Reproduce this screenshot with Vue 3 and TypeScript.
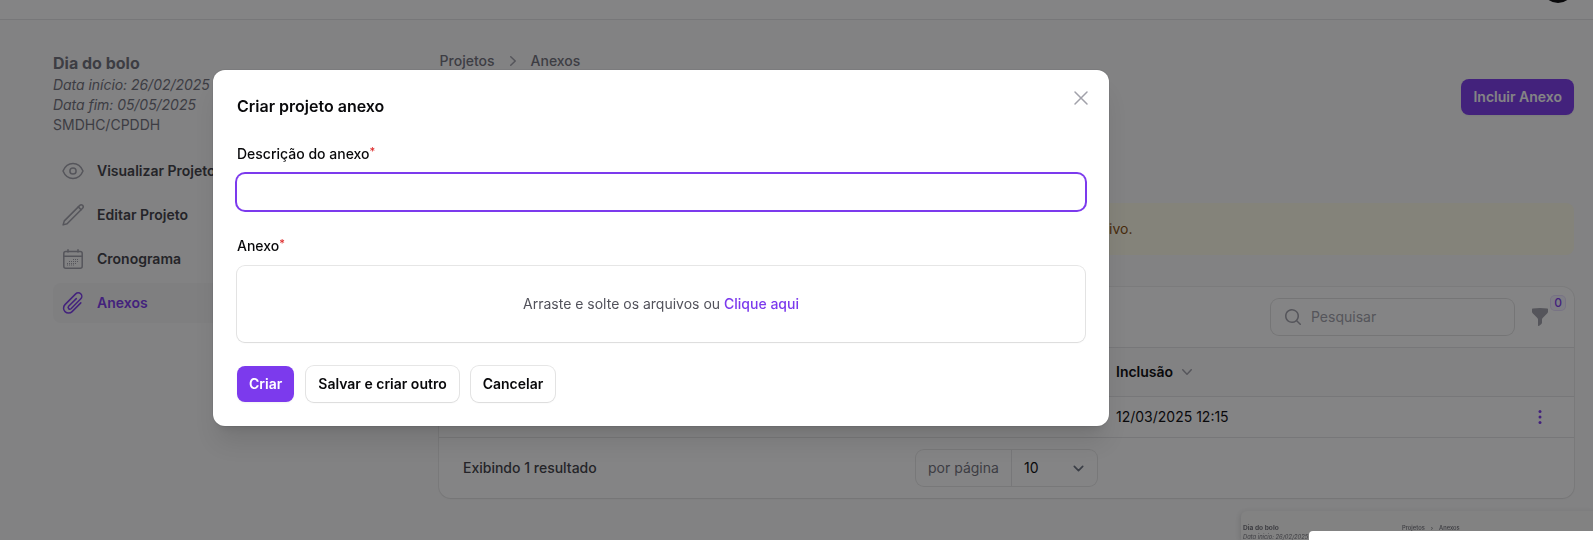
<script setup lang="ts">
import { ref } from 'vue'

interface MenuItem {
  label: string
  icon: 'eye' | 'pencil' | 'calendar' | 'clip'
  active?: boolean
}

const menu: MenuItem[] = [
  { label: 'Visualizar Projeto', icon: 'eye' },
  { label: 'Editar Projeto', icon: 'pencil' },
  { label: 'Cronograma', icon: 'calendar' },
  { label: 'Anexos', icon: 'clip', active: true },
]

// Day marks inside the calendar glyph, as [x, y] pairs
const days: number[][] = [
  [12.5, 12.5], [14.5, 12.5], [16.5, 12.5],
  [8.5, 14.5], [10.5, 14.5], [12.5, 14.5], [14.5, 14.5], [16.5, 14.5],
  [6.5, 16.5], [8.5, 16.5], [10.5, 16.5], [12.5, 16.5], [14.5, 16.5],
  [6.5, 18], [8.5, 18], [10.5, 18], [12.5, 18],
]

const description = ref('')
</script>

<template>
  <div class="page">
    <header class="topbar"><span class="avatar"></span></header>

    <div class="layout">
      <aside class="sidebar">
        <h2>Dia do bolo</h2>
        <p><em>Data início: 26/02/2025</em></p>
        <p><em>Data fim: 05/05/2025</em></p>
        <p>SMDHC/CPDDH</p>
        <nav>
          <a v-for="item in menu" :key="item.label" :class="{ active: item.active }">
            <svg viewBox="0 0 24 24" width="24" height="24" fill="none" stroke="currentColor" stroke-width="1.5" stroke-linecap="round" stroke-linejoin="round">
              <template v-if="item.icon === 'eye'">
                <path d="M2 12C4.200 6.800 7.800 4.500 12 4.500S19.800 6.800 22 12C19.800 17.200 16.200 19.500 12 19.500S4.200 17.200 2 12Z" />
                <circle cx="12" cy="12" r="3.100" />
              </template>
              <template v-else-if="item.icon === 'pencil'">
                <path d="M2.100 21.900L3.300 17.900L18.800 2.400A1.950 1.950 0 0 1 21.600 5.200L6.100 20.700Z" />
                <path d="M17.300 3.900L20.100 6.700" />
              </template>
              <template v-else-if="item.icon === 'calendar'">
                <rect x="2.800" y="4.500" width="18.400" height="16.700" rx="2" />
                <path d="M2.800 9.200H21.200M7 2.700V5M17 2.700V5" />
                <rect v-for="(d, i) in days" :key="i" :x="d[0] - 0.5" :y="d[1] - 0.5" width="1" height="1" fill="currentColor" stroke="none" />
              </template>
              <path v-else d="M19.800 11.900L11.100 20.600A4.900 4.900 0 0 1 4 13.600L14.700 2.900A3.450 3.450 0 0 1 19.800 7.800L10 17.700A1.700 1.700 0 0 1 7.600 15.300L15.300 7.600" />
            </svg>
            <span>{{ item.label }}</span>
          </a>
        </nav>
      </aside>

      <main class="content">
        <div class="crumbs">
          <span>Projetos</span>
          <svg viewBox="0 0 20 20" width="20" height="20" fill="currentColor"><path fill-rule="evenodd" d="M7.210 14.770a.75.75 0 0 1 .02-1.060L11.168 10 7.230 6.290a.75.75 0 1 1 1.040-1.080l4.500 4.250a.75.75 0 0 1 0 1.080l-4.500 4.250a.75.75 0 0 1-1.060-.02z" /></svg>
          <span>Anexos</span>
        </div>
        <div class="actions"><button class="btn primary">Incluir Anexo</button></div>
        <div class="notice">ivo.</div>

        <section class="card">
          <div class="toolbar">
            <div class="search">
              <svg viewBox="0 0 20 20" width="20" height="20" fill="currentColor"><path fill-rule="evenodd" d="M9 3.500a5.500 5.500 0 1 0 0 11 5.500 5.500 0 0 0 0-11zM2 9a7 7 0 1 1 12.452 4.391l3.328 3.329a.75.75 0 1 1-1.060 1.060l-3.329-3.328A7 7 0 0 1 2 9z" /></svg>
              <span>Pesquisar</span>
            </div>
            <div class="filter">
              <svg viewBox="0 0 20 20" width="20" height="20" fill="currentColor"><path fill-rule="evenodd" d="M2.628 1.601C5.028 1.206 7.490 1 10 1s4.973.206 7.372.601a.75.75 0 0 1 .628.740v2.288a2.250 2.250 0 0 1-.659 1.590l-4.682 4.683a2.250 2.250 0 0 0-.659 1.590v3.037c0 .684-.310 1.330-.844 1.757l-1.937 1.550A.75.75 0 0 1 8 18.250v-5.757a2.250 2.250 0 0 0-.659-1.591L2.659 6.220A2.250 2.250 0 0 1 2 4.629V2.340a.75.75 0 0 1 .628-.740z" /></svg>
              <span class="badge">0</span>
            </div>
          </div>
          <div class="row head">
            <span>Inclusão</span>
            <svg viewBox="0 0 20 20" width="20" height="20" fill="currentColor"><path fill-rule="evenodd" d="M5.230 7.210a.75.75 0 0 1 1.060.02L10 11.168l3.710-3.938a.75.75 0 1 1 1.080 1.040l-4.250 4.500a.75.75 0 0 1-1.080 0l-4.250-4.500a.75.75 0 0 1 .02-1.060z" /></svg>
          </div>
          <div class="row">
            <span>12/03/2025 12:15</span>
            <svg class="dots" viewBox="0 0 20 20" width="20" height="20" fill="currentColor"><circle cx="10" cy="4.500" r="1.500" /><circle cx="10" cy="10" r="1.500" /><circle cx="10" cy="15.500" r="1.500" /></svg>
          </div>
          <footer>
            <span class="total">Exibindo 1 resultado</span>
            <div class="perpage">
              <span class="prefix">por página</span>
              <span class="value">10</span>
              <svg viewBox="0 0 20 20" width="21" height="21" fill="none" stroke="currentColor" stroke-width="1.600" stroke-linecap="round" stroke-linejoin="round"><path d="M6 8l4 4 4-4" /></svg>
            </div>
            <span></span>
          </footer>
        </section>
      </main>
    </div>

    <div class="overlay"></div>

    <form class="modal" @submit.prevent>
      <svg class="close" viewBox="0 0 24 24" width="24" height="24" fill="none" stroke="currentColor" stroke-width="1.500" stroke-linecap="round"><path d="M6 18L18 6M6 6l12 12" /></svg>
      <h2>Criar projeto anexo</h2>
      <label class="label first">Descrição do anexo<sup>*</sup></label>
      <input v-model="description" type="text" />
      <label class="label">Anexo<sup>*</sup></label>
      <div class="drop"><span>Arraste e solte os arquivos ou <b>Clique aqui</b></span></div>
      <div class="buttons">
        <button class="btn primary">Criar</button>
        <button class="btn">Salvar e criar outro</button>
        <button class="btn">Cancelar</button>
      </div>
    </form>

    <div class="preview">
      <div class="mini-side"><b>Dia do bolo</b><em>Data início: 26/02/2025</em></div>
      <div class="mini-crumbs"><span>Projetos</span><span class="sep">›</span><span>Anexos</span></div>
      <div class="mini-modal"></div>
    </div>
  </div>
</template>

<style>
body {
  margin: 0;
  background: #fafafa;
  overflow: hidden;
}
</style>

<style scoped>
* {
  box-sizing: border-box;
}
.page {
  position: relative;
  height: 540px;
  overflow: hidden;
  background: #fafafa;
  font-family: Inter, 'Liberation Sans', sans-serif;
  font-size: 14px;
  line-height: 20px;
  color: #09090b;
}
h2,
p {
  margin: 0;
}
svg {
  display: block;
  flex: none;
}
.topbar {
  display: flex;
  justify-content: flex-end;
  align-items: flex-end;
  height: 19px;
  padding: 0 19px 16px 0;
  background: #fff;
  box-shadow: 0 1px 0 #e4e4e6;
}
.avatar {
  flex: none;
  width: 32px;
  height: 32px;
  border-radius: 50%;
  background: #09090b;
}
.layout {
  display: grid;
  grid-template-columns: 354px 1135px;
  gap: 32px;
  padding: 32px 19px 0 53px;
}
.sidebar {
  color: #71717a;
}
.sidebar h2 {
  font-size: 16px;
  line-height: 24px;
  font-weight: 700;
}
.sidebar em {
  letter-spacing: -0.04px;
}
nav {
  display: flex;
  flex-direction: column;
  gap: 4px;
  margin-top: 16px;
}
nav a {
  display: flex;
  align-items: center;
  gap: 12px;
  height: 40px;
  padding: 8px;
  border-radius: 8px;
  font-weight: 600;
  color: #3f3f46;
}
nav a svg {
  color: #a1a1aa;
}
nav a.active {
  background: #f4f4f5;
  color: #7c3aed;
}
nav a.active svg {
  color: #7c3aed;
}
.content {
  display: flex;
  flex-direction: column;
}
.crumbs {
  display: flex;
  align-items: center;
  gap: 8px;
  height: 20px;
  padding-left: 0.6px;
  font-weight: 500;
  color: #71717a;
}
.crumbs svg {
  color: #a1a1aa;
}
.actions {
  display: flex;
  justify-content: flex-end;
  margin-top: 8px;
}
.btn {
  height: 36px;
  padding: 0 12px;
  border: 0;
  border-radius: 8px;
  background: #fff;
  color: #09090b;
  font: 600 14px/20px Inter, 'Liberation Sans', sans-serif;
  white-space: nowrap;
  box-shadow: 0 0 0 1px rgba(9, 9, 11, 0.1), 0 1px 2px rgba(0, 0, 0, 0.05);
}
.btn.primary {
  background: #7c3aed;
  color: #fff;
  box-shadow: 0 1px 2px rgba(0, 0, 0, 0.05);
}
.notice {
  height: 52px;
  margin-top: 88px;
  padding: 16px 16px 16px 670px;
  border-radius: 8px;
  background: #fefce8;
  color: #854d0e;
}
.card {
  margin-top: 32px;
  border-radius: 12px;
  background: #fff;
  box-shadow: 0 0 0 1px rgba(9, 9, 11, 0.06), 0 1px 2px rgba(0, 0, 0, 0.05);
}
.toolbar {
  display: flex;
  justify-content: flex-end;
  align-items: center;
  gap: 16px;
  height: 60px;
  padding: 0 24px;
}
.search {
  display: flex;
  align-items: center;
  gap: 8px;
  width: 243px;
  height: 36px;
  padding: 0 12px;
  border-radius: 8px;
  color: #a1a1aa;
  box-shadow: 0 0 0 1px rgba(9, 9, 11, 0.12);
}
.filter {
  position: relative;
  color: #a1a1aa;
}
.badge {
  position: absolute;
  left: 20px;
  top: -12px;
  width: 16px;
  height: 16px;
  border-radius: 5px;
  background: #f5f3ff;
  box-shadow: inset 0 0 0 1px rgba(124, 58, 237, 0.12);
  color: #7c3aed;
  font-size: 12px;
  font-weight: 500;
  line-height: 16px;
  text-align: center;
}
.row {
  display: flex;
  align-items: center;
  height: 41px;
  padding: 0 24px 0 677px;
  border-top: 1px solid #e4e4e7;
}
.row.head {
  height: 49px;
  gap: 4px;
  background: #fafafa;
  font-weight: 600;
}
.row.head svg {
  color: #a1a1aa;
}
.dots {
  margin-left: auto;
  color: #7c3aed;
}
.card footer {
  display: grid;
  grid-template-columns: 1fr auto 1fr;
  align-items: center;
  height: 61px;
  padding: 0 24px;
  border-top: 1px solid #e4e4e7;
}
.total {
  font-weight: 500;
  color: #3f3f46;
}
.perpage {
  display: flex;
  align-items: center;
  width: 181px;
  height: 36px;
  border-radius: 8px;
  box-shadow: 0 0 0 1px rgba(9, 9, 11, 0.1);
}
.prefix {
  width: 96px;
  padding: 8px 0 8px 12px;
  border-right: 1px solid #e4e4e7;
  color: #71717a;
}
.value {
  flex: 1;
  padding-left: 12px;
}
.perpage svg {
  margin-right: 8px;
  color: #6b7280;
}
.overlay {
  position: fixed;
  inset: 0;
  background: rgba(9, 9, 11, 0.5);
}
.modal {
  position: absolute;
  left: 213px;
  top: 70px;
  width: 896px;
  height: 356px;
  padding: 24px;
  border-radius: 12px;
  background: #fff;
  box-shadow: 0 0 0 1px rgba(9, 9, 11, 0.05), 0 20px 25px -5px rgba(0, 0, 0, 0.1), 0 8px 10px -6px rgba(0, 0, 0, 0.1);
}
.modal h2 {
  font-size: 16px;
  line-height: 24px;
  font-weight: 600;
}
.close {
  position: absolute;
  right: 16px;
  top: 16px;
  color: #a1a1aa;
}
.label {
  display: block;
  height: 24px;
  margin: 24px 0 8px;
  line-height: 24px;
  font-weight: 500;
}
sup {
  position: relative;
  top: -0.4em;
  font-size: 11px;
  line-height: 0;
  vertical-align: baseline;
  color: #dc2626;
}
input {
  display: block;
  width: 100%;
  height: 36px;
  padding: 0 12px;
  border: 0;
  border-radius: 8px;
  outline: none;
  background: #fff;
  font: inherit;
  box-shadow: 0 0 0 2px #7c3aed;
}
.drop {
  display: flex;
  align-items: center;
  justify-content: center;
  height: 76px;
  border-radius: 8px;
  color: #52525b;
  box-shadow: 0 0 0 1px rgba(9, 9, 11, 0.1), 0 1px 2px rgba(0, 0, 0, 0.05);
}
.drop b {
  font-weight: 500;
  color: #7c3aed;
}
.buttons {
  display: flex;
  gap: 12px;
  margin-top: 24px;
}
.preview {
  position: absolute;
  left: 1241px;
  top: 511px;
  width: 352px;
  height: 29px;
  overflow: hidden;
  border-radius: 6px 0 0 0;
  background: #828282;
  box-shadow: 0 -1px 0 #7e7e7f, -1px 1px 5px rgba(0, 0, 0, 0.12);
  color: #3d3d42;
  font-size: 5.800px;
  line-height: 8px;
}
.mini-side {
  position: absolute;
  left: 2px;
  top: 13px;
  display: flex;
  flex-direction: column;
  white-space: nowrap;
}
.mini-side b {
  font-size: 6.600px;
  line-height: 9px;
  font-weight: 700;
}
.mini-crumbs {
  position: absolute;
  left: 161px;
  top: 13px;
  display: flex;
  gap: 6px;
  font-weight: 500;
}
.mini-modal {
  position: absolute;
  left: 68px;
  right: 0;
  top: 20px;
  bottom: 0;
  border-radius: 4px 0 0 0;
  background: #fff;
}
</style>
